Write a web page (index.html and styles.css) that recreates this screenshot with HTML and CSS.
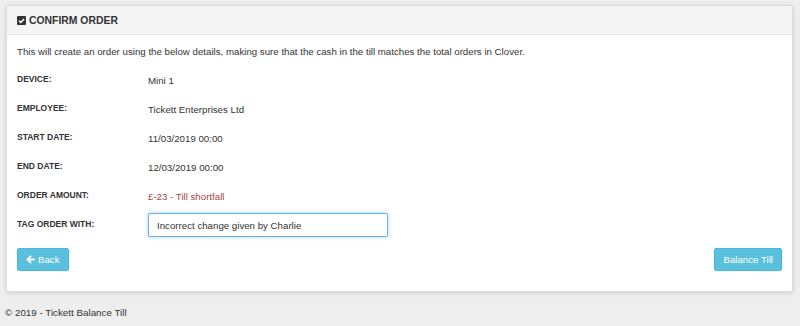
FILE: index.html
```html
<!DOCTYPE html>
<html lang="en">
<head>
  <meta charset="UTF-8">
  <title>Confirm Order - Tickett Balance Till</title>
  <link rel="stylesheet" href="styles.css">
</head>
<body>

<div class="page">
  <div class="panel">
    <div class="panel-heading">
      <svg class="check-icon" viewBox="0 0 10 10" width="9" height="9">
        <rect x="0" y="0" width="10" height="10" rx="1.2" fill="#333"/>
        <path d="M2.2 5.2 L4.2 7.1 L7.9 3.2" fill="none" stroke="#fff" stroke-width="1.6"/>
      </svg>
      Confirm Order
    </div>
    <div class="panel-body">
      <p class="intro">This will create an order using the below details, making sure that the cash in the till matches the total orders in Clover.</p>

      <div class="details">
        <div class="label">Device:</div>
        <div class="value">Mini 1</div>

        <div class="label">Employee:</div>
        <div class="value">Tickett Enterprises Ltd</div>

        <div class="label">Start Date:</div>
        <div class="value">11/03/2019 00:00</div>

        <div class="label">End Date:</div>
        <div class="value">12/03/2019 00:00</div>

        <div class="label">Order Amount:</div>
        <div class="value text-danger">£-23 - Till shortfall</div>

        <div class="label">Tag Order With:</div>
        <div class="value"><input type="text" class="form-control" value="Incorrect change given by Charlie"></div>
      </div>

      <div class="actions">
        <button class="btn">
          <svg class="arrow-icon" viewBox="0 0 10 10" width="9" height="9">
            <path d="M9 5 H2.2 M5.2 1.6 L1.6 5 L5.2 8.4" fill="none" stroke="#fff" stroke-width="2" stroke-linecap="round" stroke-linejoin="round"/>
          </svg>
          Back
        </button>
        <button class="btn">Balance Till</button>
      </div>
    </div>
  </div>

  <footer class="footer">© 2019 - Tickett Balance Till</footer>
</div>

</body>
</html>
```

FILE: styles.css
```css
body {
  margin: 0;
  background-color: #eee;
  color: #333;
  font-family: "Liberation Sans", Arial, sans-serif;
  font-size: 9.7px;
}

.page {
  padding: 5px 7px 0 6px;
}

.panel {
  background-color: #fff;
  border: 1px solid #ddd;
  border-radius: 2px;
  box-shadow: 0 1px 4px rgba(0, 0, 0, 0.15);
}

.panel-heading {
  background-color: #f5f5f5;
  border-bottom: 1px solid #e6e6e6;
  height: 28px;
  padding: 0 10px;
  display: flex;
  align-items: center;
  gap: 3px;
  font-weight: bold;
  font-size: 10.4px;
  text-transform: uppercase;
}

.check-icon {
  display: block;
}

.panel-body {
  padding: 10px 10px 20px;
}

.intro {
  margin: 0 0 6px;
  line-height: 14px;
}

.details {
  display: grid;
  grid-template-columns: 131px 240px;
  grid-auto-rows: 29px;
  align-items: center;
}

.label {
  font-weight: bold;
  font-size: 8.5px;
  text-transform: uppercase;
  margin-top: -1px;
}

.value {
  margin-top: 1px;
}

.text-danger {
  color: #a94442;
}

.form-control {
  box-sizing: border-box;
  width: 240px;
  height: 24px;
  padding: 0 8px;
  border: 1px solid #66afe9;
  border-radius: 2px;
  box-shadow: 0 0 4px rgba(102, 175, 233, 0.5);
  font-family: inherit;
  font-size: 9.7px;
  color: #333;
  outline: none;
}

.actions {
  display: flex;
  justify-content: space-between;
  margin-top: 9px;
}

.btn {
  display: flex;
  align-items: center;
  gap: 3px;
  height: 23px;
  padding: 0 8px;
  background-color: #5bc0de;
  border: 1px solid #46b8da;
  border-radius: 2px;
  color: #fff;
  font-family: inherit;
  font-size: 9.7px;
  cursor: pointer;
}

.footer {
  padding: 12px 0 0 0;
  margin-left: -1px;
  line-height: 17px;
  font-size: 9.8px;
}
```
